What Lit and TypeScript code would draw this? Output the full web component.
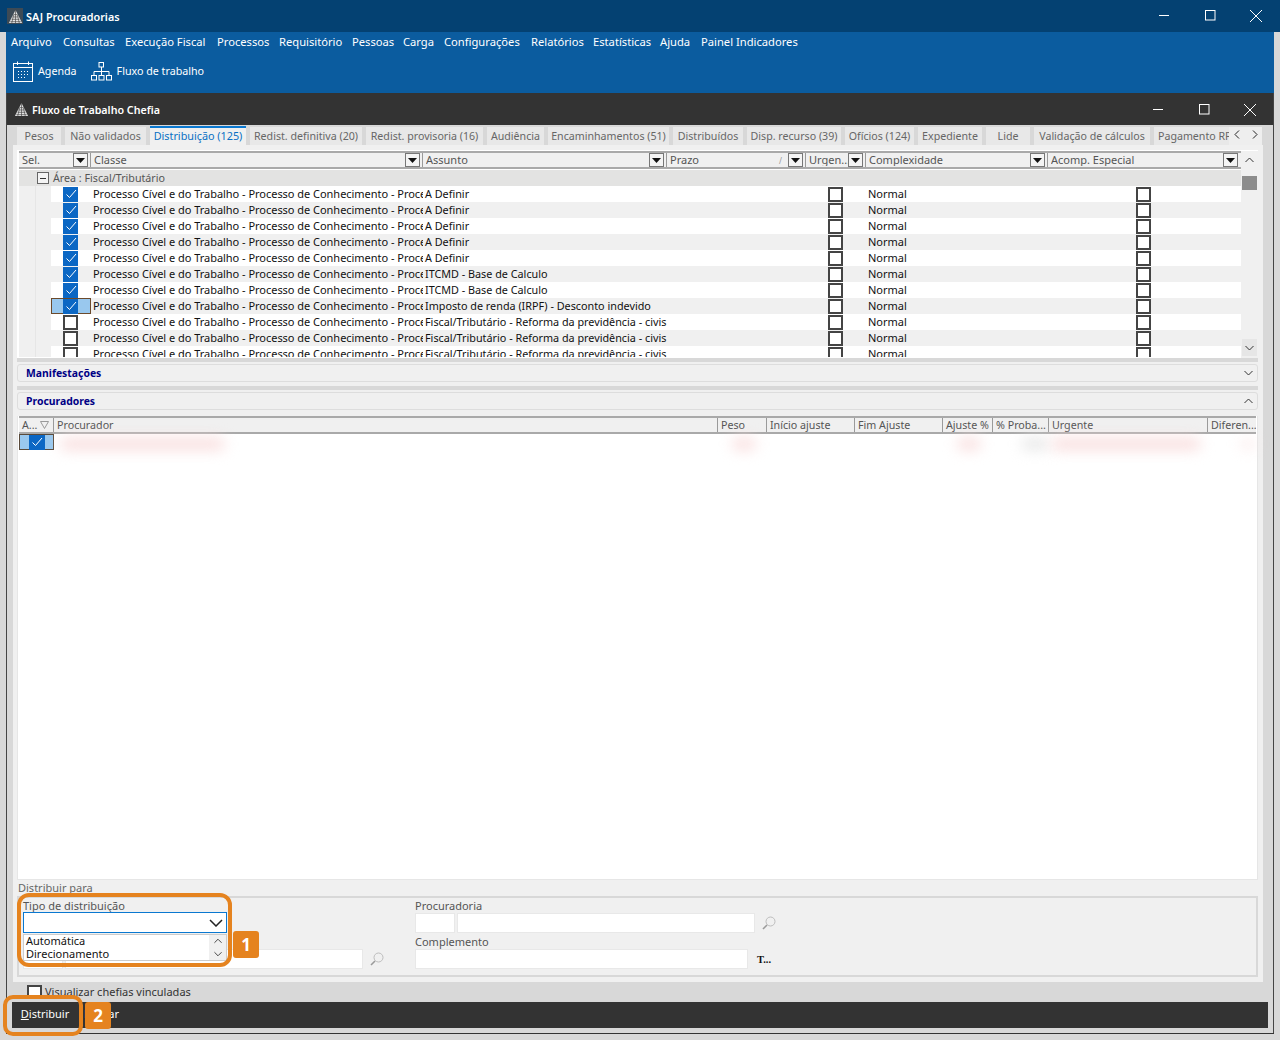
import { LitElement, html, css } from "lit";
import { customElement } from "lit/decorators.js";

const MENU: [string, number][] = [["Arquivo",52],["Consultas",62],["Execução Fiscal",92],["Processos",62],["Requisitório",73],["Pessoas",51],["Carga",41],["Configurações",87],["Relatórios",62],["Estatísticas",67],["Ajuda",41],["Painel Indicadores",100]];
const TABS: [string, number][] = [["Pesos",44],["Não validados",81],["Distribuição (125)",96],["Redist. definitiva (20)",112],["Redist. provisoria (16)",117],["Audiência",57],["Encaminhamentos (51)",121],["Distribuídos",70],["Disp. recurso (39)",94],["Ofícios (124)",69],["Expediente",64],["Lide",44],["Validação de cálculos",116],["Pagamento RPV",75]];
const HEAD1: [string, boolean][] = [["Sel.",false],["Classe",false],["Assunto",false],["Prazo",true],["Urgen...",false],["Complexidade",false],["Acomp. Especial",false]];
const CL = "Processo Cível e do Trabalho - Processo de Conhecimento - Procedimento Comum";
const ROWS: [string, boolean][] = [["A Definir",true],["A Definir",true],["A Definir",true],["A Definir",true],["A Definir",true],["ITCMD - Base de Calculo",true],["ITCMD - Base de Calculo",true],["Imposto de renda (IRPF) - Desconto indevido",true],["Fiscal/Tributário - Reforma da previdência - civis",false],["Fiscal/Tributário - Reforma da previdência - civis",false],["Fiscal/Tributário - Reforma da previdência - civis",false]];
const HEAD2 = ["Procurador","Peso","Início ajuste","Fim Ajuste","Ajuste %","% Proba...","Urgente","Diferen..."];

const logo = (s: number) => html`<svg width=${s} height=${s} viewBox="0 0 16 16"><path d="M8 1 L15 15 H1 Z" fill="#e4e4e4"/><path d="M8 1 L8 15 M6 6 H10 M5 8.500 H11 M3.800 11 H12.200 M2.500 13.500 H13.500 M6 6 L4 15 M10 6 L12 15" stroke="#444" stroke-width=".7" fill="none"/></svg>`;
const winBtns = html`<div class="winbtns">
  <svg class="wmin" width="10" height="12" viewBox="0 0 10 12"><path d="M0 5.500H10" stroke="#fff" stroke-width="1"/></svg>
  <svg class="wmax" width="11" height="12" viewBox="0 0 11 12"><rect x=".5" y=".5" width="9.500" height="9.500" fill="none" stroke="#fff" stroke-width="1"/></svg>
  <svg width="14" height="14" viewBox="0 0 14 14"><path d="M1 1L13 13M13 1L1 13" stroke="#fff" stroke-width="1"/></svg>
</div>`;
const calIcon = html`<svg width="20" height="21" viewBox="0 0 20 21" fill="none" stroke="#fff"><rect x=".5" y="2.500" width="19" height="18"/><path d="M.5 6.500H19.500M4.500 .5V4M15.500 .5V4"/><path d="M5 10.500h10M5 13.500h10M5 16.500h7" stroke-dasharray="1 2"/></svg>`;
const orgIcon = html`<svg width="21" height="19" viewBox="0 0 21 19" fill="none" stroke="#fff"><rect x="8" y=".5" width="4.500" height="4.500"/><rect x=".5" y="13.500" width="5" height="4.500"/><rect x="8" y="13.500" width="5" height="4.500"/><rect x="15.500" y="13.500" width="5" height="4.500"/><path d="M10.500 5v8.500M3 13.500V9.500H18v4"/></svg>`;
const ddBtn = html`<span class="dd"><svg width="9" height="5" viewBox="0 0 9 5"><path d="M0 0H9L4.500 5Z" fill="#111"/></svg></span>`;
const chev = (up: boolean, c = "#333", w = 9) => html`<svg width=${w} height="6" viewBox="0 0 9 6"><path d=${up ? "M.5 5L4.500 1L8.500 5" : "M.5 1L4.500 5L8.500 1"} fill="none" stroke=${c} stroke-width="1"/></svg>`;
const search = html`<svg class="mag" width="14" height="14" viewBox="0 0 14 14" fill="none"><circle cx="8.500" cy="5.500" r="4.500" stroke="#bdbdbd"/><path d="M5 9L1 13" stroke="#9a9a9a" stroke-width="1.600"/></svg>`;
const check = html`<svg width="12" height="10" viewBox="0 0 12 10"><path d="M1.500 5.500L4.500 8.500L11 1" fill="none" stroke="#fff" stroke-width="1"/></svg>`;
const box = (on: boolean) => on ? html`<span class="cb on">${check}</span>` : html`<span class="cb"></span>`;

@customElement("app-root")
export class AppRoot extends LitElement {
  static styles = css`
    :host { display: block; width: 1280px; height: 1040px; position: relative; overflow: hidden; background: #d8d8d8; font: 11px "Noto Sans", sans-serif; color: #222; }
    * { box-sizing: border-box; }
    .apptitle { height: 32px; background: #044172; color: #fff; display: flex; align-items: center; padding-left: 7px; font-weight: 600; font-size: 10.800px; }
    .applogo { width: 16px; height: 16px; background: #3d4a55; margin-right: 3px; display: flex; align-items: center; justify-content: center; }
    .winbtns { margin-left: auto; display: flex; align-items: center; }
    .wmin { margin-right: 36px; }
    .wmax { margin-right: 33px; }
    .apptitle .winbtns { padding-right: 17px; }
    .frame { margin: 0 6px; height: 1002px; display: flex; flex-direction: column; border-bottom: 1px solid #333; }
    .menu { height: 61px; background: #0b5c9f; color: #fff; flex: none; }
    .menubar { display: flex; padding-left: 5px; height: 20px; padding-bottom: 2px; align-items: center; font-size: 11.200px; }
    .menubar span { flex: none; white-space: nowrap; }
    .tools { display: flex; align-items: center; padding: 0 0 3px 7px; height: 41px; }
    .tool { display: flex; align-items: center; gap: 5px; margin-right: 14px; font-size: 10.700px; }
    .child { flex: 1; display: flex; flex-direction: column; border-left: 1px solid #444; border-right: 1px solid #444; min-height: 0; }
    .childtitle { height: 32px; background: #333; color: #fff; display: flex; align-items: center; padding: 1px 0 0 7px; gap: 3px; font-weight: 600; font-size: 10.700px; flex: none; }
    .childtitle .winbtns { padding-right: 16px; }
    .tabs { display: flex; gap: 4px; height: 20px; padding: 2px 0 0 10px; position: relative; flex: none; }
    .tab { height: 18px; background: #e8e8e8; color: #666; display: flex; align-items: center; justify-content: center; white-space: nowrap; overflow: hidden; font-size: 10.650px; flex: none; }
    .tab.clip { justify-content: flex-start; padding-left: 4px; }
    .tab.active { height: 20px; margin-top: -1px; background: #f0f0f0; color: #0a70c4; border-top: 2px solid #0a78d0; padding-bottom: 3px; font-size: 10.800px; }
    .tabnav { position: absolute; left: 1222px; top: 2px; width: 33px; height: 18px; background: #eee; display: flex; justify-content: space-between; align-items: center; padding: 0 4px 3px 5px; }
    .body { margin: 0 10px 0 6px; width: 1250px; height: 837px; background: #f0f0f0; padding: 5px 5px 5px 4px; flex: none; display: flex; flex-direction: column; }
    .table { height: 208px; background: #fff; flex: none; display: grid; grid-template-columns: 1fr 17px; overflow: hidden; padding: 1px 0 0 2px; }
    .tcol { min-width: 0; overflow: hidden; height: 206px; }
    .colhead { height: 18px; display: grid; grid-template-columns: 72px 332px 244px 139px 60px 182px 192px; background: #f0f0f0; border-top: 2px solid #a9a9a9; border-bottom: 2px solid #a9a9a9; color: #555; align-items: center; line-height: 13px; }
    .hcell { display: flex; align-items: center; height: 14px; padding: 0 2px 0 3px; border-right: 1px solid #9a9a9a; min-width: 0; white-space: nowrap; overflow: hidden; }
    .hcell:last-child { border-right: none; }
    .hcell .lbl { flex: 1; min-width: 0; overflow: hidden; margin-top: -2px; }
    .sort { color: #999; font-size: 8px; margin-right: 6px; }
    .dd { width: 15px; height: 14px; flex: none; border: 1px solid #777; background: #f4f4f4; display: inline-flex; align-items: center; justify-content: center; }
    .group { height: 16px; margin-top: 1px; background: #e3e3e2; display: flex; align-items: center; padding-left: 18px; color: #555; gap: 4px; font-size: 10.700px; line-height: 14px; }
    .minus { width: 12px; height: 12px; border: 1px solid #666; background: #f4f4f4; display: inline-flex; align-items: center; justify-content: center; }
    .minus::after { content: ""; width: 6px; height: 1px; background: #333; }
    .row { height: 16px; display: grid; grid-template-columns: 16px 16px 40px 332px 244px 139px 60px 182px 192px; background: #fff; align-items: center; color: #111; }
    .row.alt { background: #f0f0f0; }
    .ind { height: 16px; background: #f0f0f0; }
    .ind2 { border-left: 1px solid #e6e6e6; }
    .sel, .chk { height: 16px; display: flex; align-items: center; justify-content: flex-start; }
    .sel { padding-left: 12px; }
    .chk { padding-left: 22px; }
    .chk.far { padding-left: 88px; }
    .sel.cur { background: #99c8ee; border: 1px solid #6b4a2c; padding-left: 11px; }
    .txt { white-space: nowrap; overflow: hidden; padding-left: 2px; height: 16px; line-height: 15px; align-self: start; }
    .cell1 { letter-spacing: -.03px; }
    .cell3 { padding-left: 2px; font-size: 10.800px; }
    .cb { width: 15px; height: 15px; border: 2px solid #444; background: #fff; display: inline-flex; align-items: center; justify-content: center; flex: none; }
    .cb.on { background: #0b67c4; border: none; }
    .vscroll { background: #f0f0f0; display: flex; flex-direction: column; align-items: center; padding: 0 1px; }
    .vscroll .up { height: 17px; display: flex; align-items: center; justify-content: center; width: 15px; }
    .thumb { width: 15px; height: 14px; background: #8c8c8c; margin-top: 8px; }
    .vscroll .down { margin-top: auto; height: 17px; width: 15px; background: #e6e6e6; display: flex; align-items: center; justify-content: center; margin-bottom: 2px; }
    .split { height: 4px; background: #d8d8d8; flex: none; }
    .panel { height: 18px; margin-top: 2px; flex: none; border: 1px solid #ddd; border-radius: 3px; display: flex; align-items: center; justify-content: space-between; padding: 0 4px 0 8px; font-weight: 700; color: #000085; font-size: 10.400px; }
    .gap4 { height: 4px; flex: none; }
    .grid2 { flex: 1; min-height: 0; margin-top: 6px; background: #fff; border: 1px solid #e6e6e6; border-top: none; padding: 0 1px; }
    .h2 { grid-template-columns: 35px 664px 49px 88px 88px 50px 56px 159px 48px; height: 18px; font-size: 10.700px; }
    .h2 .hcell { padding-left: 3px; }
    .filter { margin-left: 3px; }
    .r2 { display: grid; grid-template-columns: 35px 664px 49px 88px 88px 50px 56px 159px 48px; height: 20px; }
    .sel2 { height: 16px; background: #99c8ee; border: 1px solid #5a4a3a; display: flex; align-items: center; justify-content: center; }
    .sel2 span { width: 16px; height: 15px; background: #0b67c4; display: flex; align-items: center; justify-content: center; }
    .smear { height: 12px; margin-top: 4px; border-radius: 6px; background: #f9dede; filter: blur(7px); }
    .smear.a { width: 165px; margin-left: 6px; }
    .smear.b { width: 24px; margin-left: 14px; }
    .smear.c { width: 150px; margin-left: 2px; }
    .smear.e { width: 28px; margin-left: 28px; background: #e8e8e8; }
    .smear.d { width: 16px; margin-left: 32px; opacity: .5; }
    .legend { height: 16px; flex: none; display: flex; align-items: center; color: #666; padding: 0 0 1px 1px; }
    .field { height: 81px; flex: none; border: 2px solid #d8d8d8; display: grid; grid-template-columns: 392px 1fr; padding: 1px 4px 0; color: #555; }
    .col { display: flex; flex-direction: column; position: relative; }
    .lb { height: 14px; line-height: 14px; white-space: nowrap; }
    .line { height: 20px; display: flex; align-items: center; margin-bottom: 2px; gap: 2px; }
    .inp { height: 20px; background: #fff; border: 1px solid #e8e8e8; flex: none; }
    .mag { margin-left: 5px; }
    .tdots { font: bold 10.500px "Liberation Serif", serif; color: #111; margin-left: 7px; }
    .combo { position: absolute; left: 0; top: 13px; width: 204px; height: 21px; background: #fff; border: 1px solid #0a78d0; display: flex; align-items: center; justify-content: flex-end; padding-right: 3px; }
    .list { position: absolute; left: 0; top: 35px; width: 204px; height: 27px; background: #fff; border: 1px solid #ccc; color: #111; line-height: 12px; padding-left: 2px; overflow: hidden; }
    .list div { height: 13px; }
    .list .lscroll { position: absolute; right: 0; top: 0; bottom: 0; width: 17px; height: auto; background: #f0f0f0; display: flex; flex-direction: column; align-items: center; justify-content: space-around; }
    .vis { height: 20px; display: flex; align-items: flex-start; padding: 3px 0 0 20px; gap: 3px; flex: none; color: #333; line-height: 14px; }
    .vis .cb { width: 15px; height: 14px; }
    .bar { margin-left: 5px; width: 1256px; height: 26px; padding-bottom: 3px; background: #333; color: #fff; display: flex; align-items: center; flex: none; }
    .bar .b1 { width: 66px; text-align: center; }
    .bar .b1 u { text-underline-offset: 1px; }
    .bar .b2 { margin-left: -11px; width: 52px; text-align: right; }
    .ring { position: absolute; border: 4px solid #e5831f; pointer-events: none; }
    .ring1 { left: 17px; top: 893px; width: 215px; height: 74px; border-radius: 12px; }
    .ring2 { left: 3px; top: 995px; width: 80px; height: 41px; border-radius: 10px; }
    .badge { position: absolute; width: 26px; height: 27px; border-radius: 3px; background: #e5831f; color: #fff; font-weight: 700; font-size: 17px; display: flex; align-items: center; justify-content: center; }
    .b1pos { left: 233px; top: 931px; }
    .b2pos { left: 85px; top: 1002px; }
  `;

  render() {
    return html`
      <div class="apptitle"><span class="applogo">${logo(15)}</span><span>SAJ Procuradorias</span>${winBtns}</div>
      <div class="frame">
        <div class="menu">
          <div class="menubar">${MENU.map(([m, w]) => html`<span style="width:${w}px">${m}</span>`)}</div>
          <div class="tools">
            <div class="tool">${calIcon}<span>Agenda</span></div>
            <div class="tool">${orgIcon}<span>Fluxo de trabalho</span></div>
          </div>
        </div>
        <div class="child">
          <div class="childtitle">${logo(15)}<span>Fluxo de Trabalho Chefia</span>${winBtns}</div>
          <div class="tabs">
            ${TABS.map(([t, w], i) => html`<div class="tab ${i === 2 ? "active" : ""} ${i === 13 ? "clip" : ""}" style="width:${w}px">${t}</div>`)}
            <div class="tabnav"><svg width="6" height="9" viewBox="0 0 6 9"><path d="M5 .5L1 4.500L5 8.500" fill="none" stroke="#222"/></svg><svg width="6" height="9" viewBox="0 0 6 9"><path d="M1 .5L5 4.500L1 8.500" fill="none" stroke="#222"/></svg></div>
          </div>
          <div class="body">
            <div class="table">
              <div class="tcol">
                <div class="colhead">
                  ${HEAD1.map(([t, s]) => html`<div class="hcell"><span class="lbl">${t}</span>${s ? html`<span class="sort">/</span>` : ""}${ddBtn}</div>`)}
                </div>
                <div class="group"><span class="minus"></span><span>Área : Fiscal/Tributário</span></div>
                ${ROWS.map(([a, on], i) => html`<div class="row ${i % 2 ? "alt" : ""}">
                  <div class="ind"></div><div class="ind ind2"></div>
                  <div class="sel ${i === 7 ? "cur" : ""}">${box(on)}</div>
                  <div class="txt cell1">${CL}</div>
                  <div class="txt cell3">${a}</div>
                  <div></div>
                  <div class="chk">${box(false)}</div>
                  <div class="txt">Normal</div>
                  <div class="chk far">${box(false)}</div>
                </div>`)}
              </div>
              <div class="vscroll">
                <div class="up">${chev(true)}</div>
                <div class="thumb"></div>
                <div class="down">${chev(false)}</div>
              </div>
            </div>
            <div class="split"></div>
            <div class="panel"><span>Manifestações</span>${chev(false)}</div>
            <div class="gap4"></div>
            <div class="split"></div>
            <div class="panel"><span>Procuradores</span>${chev(true)}</div>
            <div class="grid2">
              <div class="colhead h2">
                <div class="hcell"><span>A...</span><svg class="filter" width="9" height="8" viewBox="0 0 9 8"><path d="M.5 .5H8.500L4.500 7.500Z" fill="none" stroke="#999"/></svg></div>
                ${HEAD2.map((t) => html`<div class="hcell">${t}</div>`)}
              </div>
              <div class="r2">
                <div class="sel2"><span>${check}</span></div>
                <div><div class="smear a"></div></div>
                <div><div class="smear b"></div></div>
                <div></div><div></div><div><div class="smear b"></div></div>
                <div><div class="smear e"></div></div>
                <div><div class="smear c"></div></div>
                <div><div class="smear d"></div></div>
              </div>
            </div>
            <div class="legend">Distribuir para</div>
            <div class="field">
              <div class="col">
                <div class="lb">Tipo de distribuição</div>
                <div class="line"></div>
                <div class="lb"></div>
                <div class="line"><div class="inp" style="width:40px"></div><div class="inp" style="width:298px"></div>${search}</div>
                <div class="combo"><svg width="14" height="8" viewBox="0 0 14 8"><path d="M1 1L7 7L13 1" fill="none" stroke="#222" stroke-width="1.500"/></svg></div>
                <div class="list"><div>Automática</div><div>Direcionamento</div><div class="lscroll">${chev(true, "#333", 8)}${chev(false, "#333", 8)}</div></div>
              </div>
              <div class="col">
                <div class="lb">Procuradoria</div>
                <div class="line"><div class="inp" style="width:40px"></div><div class="inp" style="width:298px"></div>${search}</div>
                <div class="lb">Complemento</div>
                <div class="line"><div class="inp" style="width:333px"></div><span class="tdots">T...</span></div>
              </div>
            </div>
          </div>
          <div class="vis"><span class="cb"></span><span>Visualizar chefias vinculadas</span></div>
          <div class="bar"><div class="b1"><u>D</u>istribuir</div><div class="b2">Fechar</div></div>
        </div>
      </div>
      <div class="ring ring1"></div>
      <div class="ring ring2"></div>
      <div class="badge b1pos">1</div>
      <div class="badge b2pos">2</div>
    `;
  }
}
